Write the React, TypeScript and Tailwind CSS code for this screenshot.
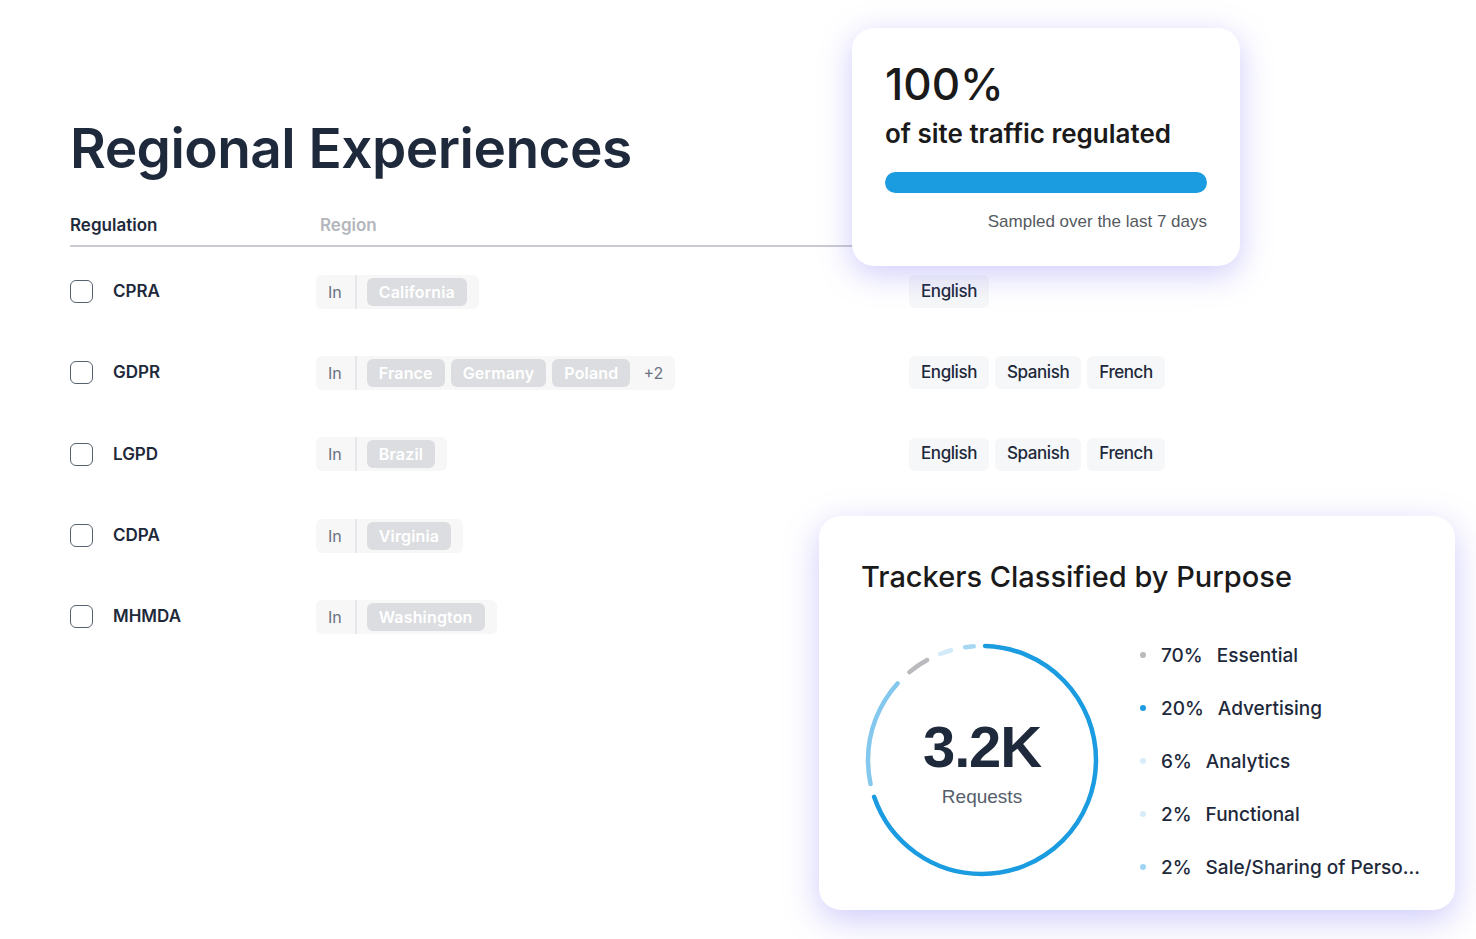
const rows = [
  { name: 'CPRA', regions: ['California'], more: 0, langs: ['English'] },
  { name: 'GDPR', regions: ['France', 'Germany', 'Poland'], more: 2, langs: ['English', 'Spanish', 'French'] },
  { name: 'LGPD', regions: ['Brazil'], more: 0, langs: ['English', 'Spanish', 'French'] },
  { name: 'CDPA', regions: ['Virginia'], more: 0, langs: ['English'] },
  { name: 'MHMDA', regions: ['Washington'], more: 0, langs: ['English'] },
];

const legend = [
  { pct: '70%', label: 'Essential', color: '#b9b9be' },
  { pct: '20%', label: 'Advertising', color: '#1b9be0' },
  { pct: '6%', label: 'Analytics', color: '#d6edf9' },
  { pct: '2%', label: 'Functional', color: '#d6edf9' },
  { pct: '2%', label: 'Sale/Sharing of Perso...', color: '#9fd5f2' },
];

// arcs in degrees, clockwise from 12 o'clock
const arcs = [
  { from: 0.5, to: 252, color: '#1b9be0' },
  { from: 256.5, to: 313, color: '#85c8ee' },
  { from: 319, to: 332, color: '#b9b9be' },
  { from: 337, to: 345, color: '#d3ebf8' },
  { from: 350, to: 356.5, color: '#a6d8f3' },
];

const Donut = () => {
  const r = 114;
  const c = 2 * Math.PI * r;
  const cap = 1.1;
  return (
    <svg width="240" height="240" viewBox="0 0 240 240" className="-rotate-90">
      {arcs.map((a, i) => {
        const start = ((a.from + cap) / 360) * c;
        const len = ((a.to - a.from - 2 * cap) / 360) * c;
        return (
          <circle
            key={i}
            cx="120"
            cy="120"
            r={r}
            fill="none"
            stroke={a.color}
            strokeWidth="4.5"
            strokeLinecap="round"
            strokeDasharray={`${len} ${c}`}
            strokeDashoffset={-start}
          />
        );
      })}
    </svg>
  );
};

const Row = ({ row }: { row: (typeof rows)[number] }) => (
  <div className="grid grid-cols-[246px_593px_1fr] h-[81.3px] items-center">
    <div className="flex items-center gap-5">
      <div className="w-[23px] h-[23px] rounded-[6px] border-[1.5px] border-[#56606e]" />
      <span className="text-[17px] font-semibold text-[#1e293b] leading-none">{row.name}</span>
    </div>
    <div>
      <div className="inline-flex h-[34px] items-stretch rounded-[6px] bg-[#f7f7f8] pl-3 pr-3">
        <span className="flex items-center text-[16px] text-[#6b7280] pr-[13px]">In</span>
        <div className="w-[2px] bg-[#e6e8eb]" />
        <div className="flex items-center gap-[6px] pl-[10px]">
          {row.regions.map((r) => (
            <span key={r} className="h-[28px] px-3 rounded-[6px] bg-[#dcdde0] text-white text-[16px] font-semibold tracking-[0.01em] flex items-center">
              {r}
            </span>
          ))}
          {row.more > 0 && <span className="ml-[7px] text-[16px] text-[#6b7280]">+{row.more}</span>}
        </div>
      </div>
    </div>
    <div className="flex gap-[6px]">
      {row.langs.map((l) => (
        <span key={l} className="h-[33px] px-3 rounded-[6px] bg-[#f6f7f8] text-[17px] font-medium text-[#1e293b] flex items-center tracking-[-0.025em]">
          {l}
        </span>
      ))}
    </div>
  </div>
);

export default function App() {
  return (
    <div className="relative w-[1476px] h-[939px] overflow-hidden bg-white font-['Inter',sans-serif]">
      <div className="pl-[70px] pt-[121px] w-[1170px]">
        <h1 className="text-[55px] leading-none font-semibold text-[#1e293b] tracking-[-0.01em]">Regional Experiences</h1>
        <div className="mt-[41px] grid grid-cols-[250px_1fr] pb-[11px] border-b-2 border-[#c9cbd0] text-[17px] leading-none font-semibold">
          <span className="text-[#1e293b]">Regulation</span>
          <span className="text-[#b3b6bc]">Region</span>
        </div>
        <div className="mt-[4px]">
          {rows.map((row) => (
            <Row key={row.name} row={row} />
          ))}
        </div>
      </div>

      {/* traffic card */}
      <div className="absolute left-[852px] top-[28px] w-[388px] h-[238px] rounded-[22px] bg-white shadow-[0_8px_32px_rgba(120,110,240,0.36)] px-[33px] pt-[34px]">
        <div className="text-[44px] leading-none font-medium text-[#1a1a1a]">100%</div>
        <div className="mt-[15px] text-[26px] leading-none font-semibold text-[#1a1a1a]">of site traffic regulated</div>
        <div className="mt-[25px] h-[21px] rounded-full bg-[#1b9be0]" />
        <div className="mt-[20px] text-right text-[17px] leading-none text-[#555a60] tracking-normal font-['Liberation_Sans',sans-serif]">
          Sampled over the last 7 days
        </div>
      </div>

      {/* trackers card */}
      <div className="absolute left-[819px] top-[516px] w-[636px] h-[394px] rounded-[22px] bg-white shadow-[0_10px_34px_rgba(120,110,240,0.36)] pl-[42px] pt-[46px]">
        <h2 className="text-[29px] leading-none font-medium text-[#1a1a1a] tracking-normal">Trackers Classified by Purpose</h2>
        <div className="mt-[49px] flex">
          <div className="relative ml-[1px] w-[240px] h-[240px]">
            <Donut />
            <div className="absolute inset-0 flex flex-col items-center justify-center font-['Liberation_Sans',sans-serif]">
              <span className="text-[58px] leading-none font-bold text-[#1e293b] tracking-[-0.02em] mt-[3px]">3.2K</span>
              <span className="mt-[11px] text-[19px] leading-none text-[#555e6b]">Requests</span>
            </div>
          </div>
          <div className="ml-[38px] mt-[5px] flex flex-col gap-[33px]">
            {legend.map((l) => (
              <div key={l.label} className="flex items-center h-[20px] text-[19px] leading-none font-medium text-[#1e293b]">
                <span className="w-[6px] h-[6px] rounded-full mr-[15px]" style={{ backgroundColor: l.color }} />
                <span className="mr-[14px]">{l.pct}</span>
                <span>{l.label}</span>
              </div>
            ))}
          </div>
        </div>
      </div>
    </div>
  );
}
